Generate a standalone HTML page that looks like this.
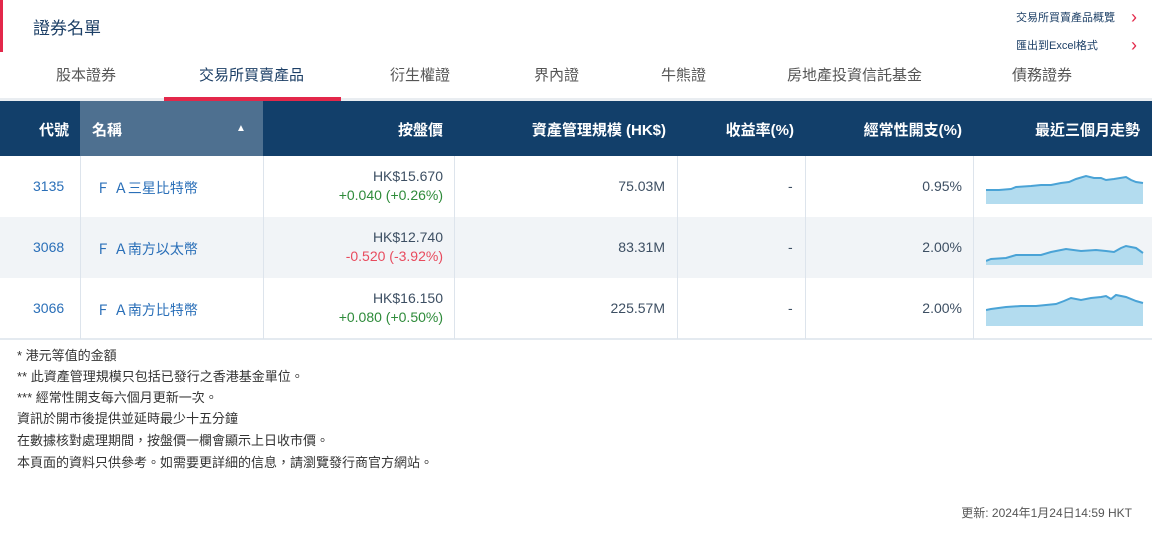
<!DOCTYPE html>
<html><head><meta charset="utf-8"><style>
*{margin:0;padding:0;box-sizing:border-box}
body{width:1152px;height:535px;background:#fff;font-family:"Liberation Sans","Noto Sans CJK TC",sans-serif;position:relative;overflow:hidden;color:#3d4f63}
.a{position:absolute;white-space:nowrap}
.tab{position:absolute;top:64px;font-size:15px;color:#555;text-align:center}
.hd{position:absolute;top:101px;height:55px;background:#123f6a;left:0;width:1152px}
.h{position:absolute;top:119px;font-size:15px;color:#fff;font-weight:bold;white-space:nowrap}
.row{position:absolute;left:0;width:1152px;height:61px}
.vl{position:absolute;top:156px;height:183px;width:1px;background:#dde4ec}
.c{position:absolute;font-size:14px;color:#3d4f63;white-space:nowrap}
.fn{position:absolute;left:17px;font-size:13px;color:#333;white-space:nowrap}
.chev{position:absolute;font-size:18px;color:#e3284a;line-height:1}
</style></head><body>
<div class="a" style="left:0;top:0;width:3px;height:52px;background:#e3284a"></div>
<div class="a" style="left:33px;top:14px;font-size:17px;color:#1c3f66">證券名單</div>
<div class="a" style="left:1016px;top:9px;font-size:11px;color:#1c3f66">交易所買賣產品概覽</div>
<div class="chev" style="left:1131px;top:8px">›</div>
<div class="a" style="left:1016px;top:37px;font-size:11px;color:#1c3f66">匯出到Excel格式</div>
<div class="chev" style="left:1131px;top:36px">›</div>
<div class="tab" style="left:56px">股本證券</div>
<div class="tab" style="left:199px;color:#1c3f66">交易所買賣產品</div>
<div class="tab" style="left:390px">衍生權證</div>
<div class="tab" style="left:534px">界內證</div>
<div class="tab" style="left:661px">牛熊證</div>
<div class="tab" style="left:787px">房地產投資信託基金</div>
<div class="tab" style="left:1012px">債務證券</div>
<div class="a" style="left:0;top:98px;width:1152px;height:3px;background:#e9edf1"></div>
<div class="a" style="left:164px;top:97px;width:177px;height:4px;background:#e3284a"></div>
<div class="hd"></div>
<div class="a" style="left:80px;top:101px;width:183px;height:55px;background:#4e7090"></div>
<div class="h" style="right:1083px">代號</div>
<div class="h" style="left:92px">名稱</div>
<div class="h" style="left:236px;font-size:10px;top:123px">▲</div>
<div class="h" style="right:709px">按盤價</div>
<div class="h" style="right:486px">資產管理規模 (HK$)</div>
<div class="h" style="right:358px">收益率(%)</div>
<div class="h" style="right:190px">經常性開支(%)</div>
<div class="h" style="right:12px">最近三個月走勢</div>
<div class="row" style="top:156px;background:#fff"></div>
<div class="row" style="top:217px;background:#f1f4f7"></div>
<div class="row" style="top:278px;background:#fff"></div>
<div class="a" style="left:0;top:338px;width:1152px;height:2px;background:#e4eaf0"></div>
<div class="vl" style="left:80px"></div><div class="vl" style="left:263px"></div><div class="vl" style="left:454px"></div><div class="vl" style="left:677px"></div><div class="vl" style="left:805px"></div><div class="vl" style="left:973px"></div>

<div class="c" style="left:33px;top:178px;color:#2a6fb8">3135</div>
<div class="c" style="left:96px;top:178px;color:#2a6fb8">Ｆ Ａ三星比特幣</div>
<div class="c" style="right:709px;top:168px">HK$15.670</div>
<div class="c" style="right:709px;top:187px;color:#2e8b3a">+0.040 (+0.26%)</div>
<div class="c" style="right:487px;top:178px">75.03M</div>
<div class="c" style="left:788px;top:178px">-</div>
<div class="c" style="right:190px;top:178px">0.95%</div>

<div class="c" style="left:33px;top:239px;color:#2a6fb8">3068</div>
<div class="c" style="left:96px;top:239px;color:#2a6fb8">Ｆ Ａ南方以太幣</div>
<div class="c" style="right:709px;top:229px">HK$12.740</div>
<div class="c" style="right:709px;top:248px;color:#e84b5e">-0.520 (-3.92%)</div>
<div class="c" style="right:487px;top:239px">83.31M</div>
<div class="c" style="left:788px;top:239px">-</div>
<div class="c" style="right:190px;top:239px">2.00%</div>

<div class="c" style="left:33px;top:300px;color:#2a6fb8">3066</div>
<div class="c" style="left:96px;top:300px;color:#2a6fb8">Ｆ Ａ南方比特幣</div>
<div class="c" style="right:709px;top:290px">HK$16.150</div>
<div class="c" style="right:709px;top:309px;color:#2e8b3a">+0.080 (+0.50%)</div>
<div class="c" style="right:487px;top:300px">225.57M</div>
<div class="c" style="left:788px;top:300px">-</div>
<div class="c" style="right:190px;top:300px">2.00%</div>

<svg class="a" style="left:986px;top:170px" width="158" height="36" viewBox="0 0 158 36">
<path d="M0 20 L13 20 L25 19 L30 17 L45 16 L55 15 L65 15 L75 13 L83 12 L90 9 L100 6 L108 8 L115 8 L120 10 L128 9 L140 7 L145 10 L150 12 L157 13 L157 34 L0 34Z" fill="#b3dcef"/>
<path d="M0 20 L13 20 L25 19 L30 17 L45 16 L55 15 L65 15 L75 13 L83 12 L90 9 L100 6 L108 8 L115 8 L120 10 L128 9 L140 7 L145 10 L150 12 L157 13" fill="none" stroke="#4aa3d6" stroke-width="2"/>
</svg>
<svg class="a" style="left:986px;top:231px" width="158" height="36" viewBox="0 0 158 36">
<path d="M0 30 L5 28 L20 27 L30 24 L45 24 L55 24 L65 21 L80 18 L95 20 L110 19 L120 20 L128 21 L135 17 L140 15 L150 17 L157 22 L157 34 L0 34Z" fill="#b3dcef"/>
<path d="M0 30 L5 28 L20 27 L30 24 L45 24 L55 24 L65 21 L80 18 L95 20 L110 19 L120 20 L128 21 L135 17 L140 15 L150 17 L157 22" fill="none" stroke="#4aa3d6" stroke-width="2"/>
</svg>
<svg class="a" style="left:986px;top:292px" width="158" height="36" viewBox="0 0 158 36">
<path d="M0 18 L5 17 L20 15 L35 14 L50 14 L60 13 L70 12 L78 9 L85 6 L95 8 L105 6 L115 5 L120 4 L125 7 L130 3 L140 5 L150 9 L157 11 L157 34 L0 34Z" fill="#b3dcef"/>
<path d="M0 18 L5 17 L20 15 L35 14 L50 14 L60 13 L70 12 L78 9 L85 6 L95 8 L105 6 L115 5 L120 4 L125 7 L130 3 L140 5 L150 9 L157 11" fill="none" stroke="#4aa3d6" stroke-width="2"/>
</svg>

<div class="fn" style="top:345px">* 港元等值的金額</div>
<div class="fn" style="top:366px">** 此資產管理規模只包括已發行之香港基金單位。</div>
<div class="fn" style="top:387px">*** 經常性開支每六個月更新一次。</div>
<div class="fn" style="top:408px">資訊於開市後提供並延時最少十五分鐘</div>
<div class="fn" style="top:430px">在數據核對處理期間，按盤價一欄會顯示上日收市價。</div>
<div class="fn" style="top:452px">本頁面的資料只供參考。如需要更詳細的信息，請瀏覽發行商官方網站。</div>
<div class="a" style="right:20px;top:504px;font-size:12px;color:#555">更新: 2024年1月24日14:59 HKT</div>
</body></html>
